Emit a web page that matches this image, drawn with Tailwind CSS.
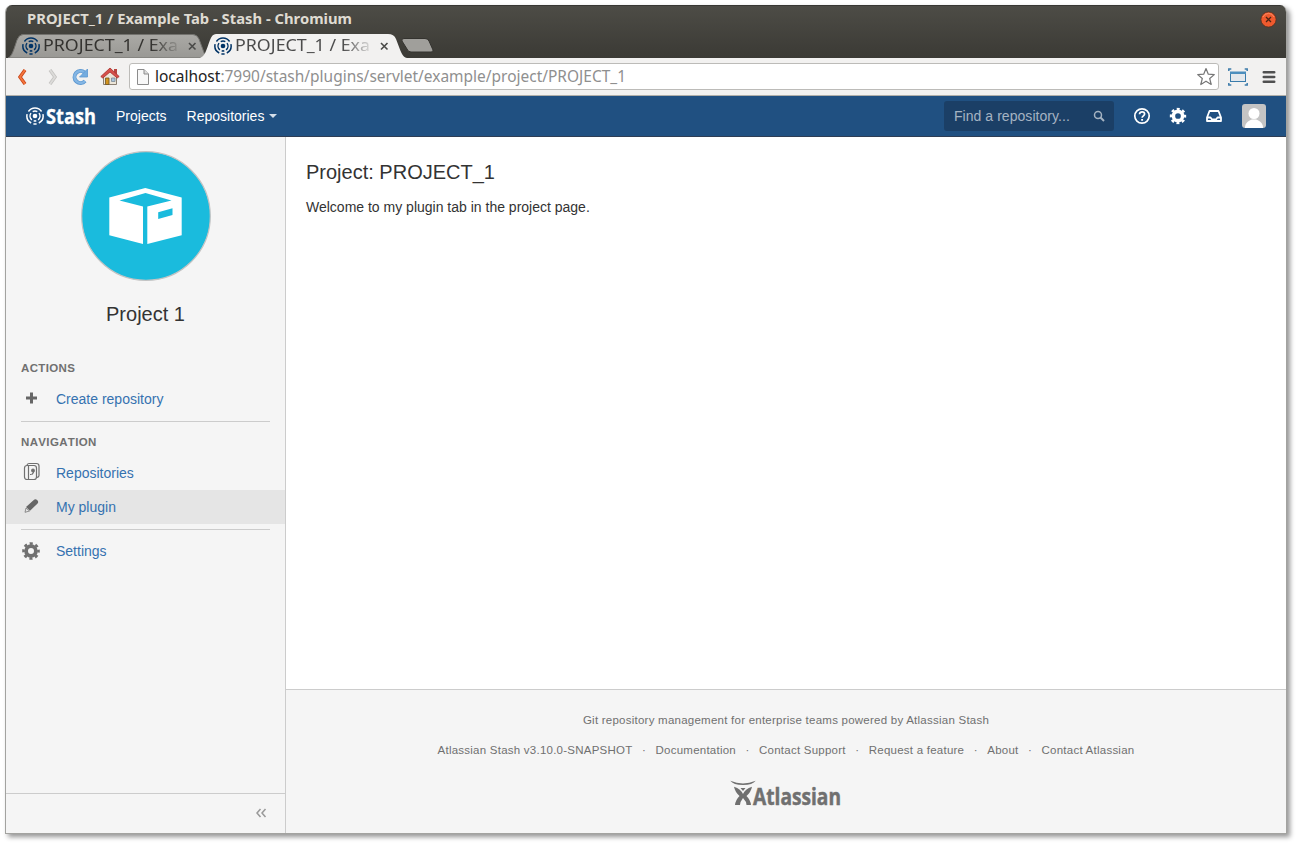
<!DOCTYPE html>
<html lang="en">
<head>
<meta charset="utf-8">
<title>PROJECT_1 / Example Tab - Stash</title>
<script src="https://cdn.jsdelivr.net/npm/@tailwindcss/browser@4"></script>
</head>
<body class="w-[1296px] h-[843px] overflow-hidden bg-white pl-[5px] pt-[5px] font-['Liberation_Sans',sans-serif] text-[14px] text-[#333]">
<svg width="0" height="0" class="absolute">
  <defs>
    <symbol id="target" viewBox="0 0 18 18">
      <g fill="none" stroke="currentColor" stroke-width="1.5">
        <path d="M2.400 4.500A8 8 0 0 1 15.600 4.500M1.100 7.200A8 8 0 0 0 5.200 16M16.900 7.200A8 8 0 0 1 12.800 16M7.400 16.900H10.600"/>
        <path d="M5.900 12.900A4.950 4.950 0 0 1 5 6.100M12.100 12.900A4.950 4.950 0 0 0 13 6.100M6.700 4.600A4.950 4.950 0 0 1 11.300 4.600M7.700 13.800A4.950 4.950 0 0 0 10.300 13.800"/>
      </g>
      <circle cx="9" cy="9" r="2.300" fill="currentColor"/>
    </symbol>
    <symbol id="gear" viewBox="0 0 18 18">
      <g fill="none" stroke="currentColor">
        <circle cx="9" cy="9" r="4.9" stroke-width="3.8"/>
        <circle cx="9" cy="9" r="7.5" stroke-width="2.6" stroke-dasharray="3.1 2.79" stroke-dashoffset="1.55"/>
      </g>
    </symbol>
    <linearGradient id="tabGray" x1="0" y1="0" x2="0" y2="1"><stop offset="0" stop-color="#aaa9a5"/><stop offset="1" stop-color="#999894"/></linearGradient>
  </defs>
</svg>
<div class="w-[1282px] h-[829px] rounded-t-[7px] border-l border-r border-b border-[#a3a3a0] shadow-[3px_3px_5px_rgba(0,0,0,0.42)] overflow-hidden flex flex-col">
  <div class="h-[53px] shrink-0 bg-linear-to-b from-[#4d4c46] to-[#3b3a35] border-t border-[#383733] flex flex-col">
    <div class="h-[28px] flex items-start justify-between pl-[21px] pr-[9px]">
      <svg width="330" height="26" class="block"><text x="0" y="18" textLength="325" lengthAdjust="spacingAndGlyphs" font-family="Noto Sans" font-weight="700" font-size="14" fill="#dfdbd2">PROJECT_1 / Example Tab - Stash - Chromium</text></svg>
      <svg width="17" height="17" viewBox="0 0 17 17" class="mt-[5px]"><circle cx="8.500" cy="8.500" r="7.600" fill="#ee5a2e" stroke="#59301f" stroke-width=".8"/><path d="M3 6a6 6 0 0 1 11 0" fill="none" stroke="#fb8a62" stroke-width="1"/><path d="m6 6 5 5m0-5-5 5" stroke="#4b2414" stroke-width="1.300"/></svg>
    </div>
    <div class="h-[24px] flex relative">
      <svg width="440" height="24" class="absolute left-0 top-0">
        <path d="M4 24C8 22 9 18 13 6Q15 .5 19 .5H189Q193 .5 195 5L202 24Z" transform="translate(-2 0)" fill="url(#tabGray)" stroke="#73726e"/>
        <path d="M194 24C199 22 200 17 204 6Q206 0 210 0H382Q388 0 390 5C395 18 396 23 401 24Z" fill="#f2f1f0"/>
        <path d="M398 4.500H419Q422 4.500 423 7L427 16Q427.500 18 425 18H405Q402 18 401 15L396 7Q395 4.500 398 4.500Z" fill="#a09f9b" stroke="#34332f" />
      </svg>
      <div class="relative w-[192px] flex items-center pl-[16px] text-[#003366]">
        <svg width="18" height="18"><use href="#target"/></svg>
        <svg width="142" height="24" class="ml-[3px] mask-r-from-76% mask-r-to-98%"><text x="0" y="17" textLength="135" lengthAdjust="spacingAndGlyphs" font-family="Noto Sans" font-size="16.500" fill="#33322f">PROJECT_1 / Exa</text></svg>
        <svg width="9" height="9" viewBox="0 0 9 9" class="ml-[3px]"><path d="m1 1 6.500 6.500m0-6.500L1 7.500" stroke="#4a4a48" stroke-width="1.600"/></svg>
      </div>
      <div class="relative w-[192px] flex items-center pl-[16px] text-[#003366]">
        <svg width="18" height="18"><use href="#target"/></svg>
        <svg width="142" height="24" class="ml-[3px] mask-r-from-76% mask-r-to-98%"><text x="0" y="17" textLength="135" lengthAdjust="spacingAndGlyphs" font-family="Noto Sans" font-size="16.500" fill="#4c4c4c">PROJECT_1 / Exa</text></svg>
        <svg width="9" height="9" viewBox="0 0 9 9" class="ml-[3px]"><path d="m1 1 6.500 6.500m0-6.500L1 7.500" stroke="#4a4a48" stroke-width="1.600"/></svg>
      </div>
    </div>
  </div>
  <div class="h-[38px] shrink-0 bg-[#f2f1f0] border-b border-[#b0afaa] flex items-center">
    <svg width="10" height="16" viewBox="0 0 10 16" class="ml-[11px]"><path d="M8 1 3 8l5 7" fill="none" stroke="#c9451a" stroke-width="3.400"/><path d="M8 1 3 8l5 7" fill="none" stroke="#f4763c" stroke-width="1.800"/></svg>
    <svg width="10" height="16" viewBox="0 0 10 16" class="ml-[21px]"><path d="m2 1 5 7-5 7" fill="none" stroke="#c4c3c1" stroke-width="3.400"/><path d="m2 1 5 7-5 7" fill="none" stroke="#dcdbd9" stroke-width="1.800"/></svg>
    <svg width="18" height="18" viewBox="0 0 18 18" class="ml-[13px]"><path d="M13.500 4.500A6 6 0 1 0 14 13" fill="none" stroke="#5c97d0" stroke-width="4"/><path d="M13.500 4.500A6 6 0 1 0 14 13" fill="none" stroke="#84b6e4" stroke-width="2.400"/><path d="M16.500 1v8H8.500Z" fill="#74acdf" stroke="#5c97d0" stroke-width=".8"/></svg>
    <svg width="20" height="20" viewBox="0 0 20 20" class="ml-[11px] mb-[2px]"><path d="M3.500 9v9.500h13V9L10 3Z" fill="#ece5d8" stroke="#8a7f72"/><path d="M14 3h3v6l-3-3Z" fill="#b8473f"/><path d="M.8 10.500 10 2l9.200 8.500-2 1.500L10 6l-7.200 6Z" fill="#d6504b" stroke="#a8322c" stroke-width=".8"/><path d="M5.500 12h3.500v6.500H5.500Z" fill="#d3941f" stroke="#6e5524" stroke-width=".8"/><path d="M11.500 12h3.500v3.500h-3.500Z" fill="#a9c4dc" stroke="#7b8a96" stroke-width=".8"/></svg>
    <div class="ml-[9px] w-[1090px] h-[27px] rounded-[3px] border border-[#bcbbb8] bg-white flex items-center">
      <svg width="12" height="16" viewBox="0 0 12 16" class="ml-[7px]"><path d="M.5.500h6.500l4.500 4.500v10.500H.5Z" fill="#f8f8f8" stroke="#8c8c8c"/><path d="M7 .5V5h4.500" fill="#ddd" stroke="#8c8c8c"/></svg>
      <svg width="480" height="24" class="ml-[6px]"><text x="0" y="17" textLength="471" lengthAdjust="spacingAndGlyphs" font-family="Noto Sans" font-size="15.500" fill="#8f8f8f"><tspan fill="#222">localhost</tspan>:7990/stash/plugins/servlet/example/project/PROJECT_1</text></svg>
      <svg width="20" height="19" viewBox="0 0 20 19" class="ml-auto mr-[2px]"><path d="m10 1.500 2.300 5.700 6 .4-4.600 3.900 1.500 6L10 14.200l-5.200 3.300 1.500-6L1.700 7.600l6-.4Z" fill="#fff" stroke="#777" stroke-width="1.200" stroke-linejoin="round"/></svg>
    </div>
    <svg width="20" height="18" viewBox="0 0 20 18" class="ml-[9px]"><path d="M.8 3V1h2.500M16.700 1h2.500v2M.8 15v2h2.500M16.700 17h2.500v-2" fill="none" stroke="#3e7cab" stroke-width="1.500"/><rect x="2.500" y="4.500" width="15" height="9" fill="#e4e8ec" stroke="#3a7cab"/><path d="M2 3.500h16V6H2Z" fill="#4c8ebd"/></svg>
    <svg width="14" height="14" viewBox="0 0 14 14" class="ml-[14px]"><path d="M1.800 2.300h10.400M1.800 7h10.400M1.800 11.700h10.400" stroke="#505050" stroke-width="2.600" stroke-linecap="round"/></svg>
  </div>
  <header class="h-[41px] shrink-0 bg-[#205081] border-b border-[#2e3d54] flex items-center text-white">
    <svg width="18" height="18" class="ml-[20px]"><use href="#target"/></svg>
    <svg width="54" height="38" class="ml-[2px]"><text x="0" y="27" textLength="50" lengthAdjust="spacingAndGlyphs" font-family="Open Sans" font-weight="700" font-size="20.500" fill="#fff" stroke="#fff" stroke-width=".3">Stash</text></svg>
    <span class="ml-[16px]">Projects</span>
    <span class="ml-[20px]">Repositories</span>
    <svg width="8" height="4" class="ml-[5px]"><path d="M0 0h8L4 4Z" fill="#d5dfea"/></svg>
    <div class="ml-auto w-[170px] h-[30px] rounded-[3px] bg-[#1b3f66] flex items-center justify-between pl-[10px] pr-[9px] text-[#a5b3c2]">
      <span class="tracking-[0.05px]">Find a repository...</span>
      <svg width="12" height="12" viewBox="0 0 12 12" fill="none" stroke="#a5b3c2"><circle cx="5" cy="5" r="3.500" stroke-width="1.500"/><path d="m7.500 7.500 3.500 3.500" stroke-width="2"/></svg>
    </div>
    <svg width="18" height="18" viewBox="0 0 18 18" class="ml-[19px]" fill="none" stroke="#fff"><circle cx="9" cy="9" r="7.200" stroke-width="1.700"/><path d="M6.500 7.200C6.500 4 11.600 4.200 11.600 7c0 1.800-2.500 1.900-2.500 3.800" stroke-width="1.700"/><path d="M9.100 12v1.800" stroke-width="1.900"/></svg>
    <svg width="18" height="18" class="ml-[18px]" viewBox="0 0 19 19"><use href="#gear" x=".5" y=".5" width="18" height="18"/></svg>
    <svg width="18" height="14" viewBox="0 0 18 14" class="ml-[18px]"><path d="M4.500 2h9L16 8.500V12H2V8.500ZM2 8.500h3.500L7 10.500h4l1.500-2H16" fill="none" stroke="#fff" stroke-width="1.800" stroke-linejoin="round"/></svg>
    <svg width="24" height="24" viewBox="0 0 24 24" class="ml-[19px] mr-[20px] rounded-[3px] bg-[#c4c4c4]"><circle cx="12" cy="9.500" r="5.500" fill="#fff"/><path d="M3 24c0-5 3-7 7-8.500h4c4 1.500 7 3.500 7 8.500Z" fill="#fff"/></svg>
  </header>
  <div class="flex flex-1 min-h-0">
    <aside class="w-[280px] shrink-0 bg-[#f5f5f5] border-r border-[#ccc] flex flex-col">
      <svg width="130" height="130" viewBox="0 0 130 130" class="ml-[75px] mt-[14px]">
        <circle cx="65" cy="65" r="64.300" fill="#1abbdd" stroke="#c3c3c3" stroke-width="1.200"/>
        <path d="M28.300 46.500 64.300 37l36.400 9.500v37.800L66.300 93V55.500L90.500 49.600 64.500 42l-26 7.600 23.500 5.900V93l-33.700-8.700Z" fill="#fff"/>
        <path d="m77.200 61.200 14.300-4v6.800l-14.300 4Z" fill="#1abbdd"/>
      </svg>
      <h2 class="mt-[21px] text-[20px] leading-[24px] text-center">Project 1</h2>
      <h3 class="ml-[15px] mt-[36px] h-[13px] text-[11.500px] leading-[13px] font-bold text-[#707070] [font-kerning:none] tracking-[0.35px]">ACTIONS</h3>
      <div class="mt-[7px] h-[34px] flex items-center pl-[15px] text-[#3572b0]">
        <svg width="20" height="20" viewBox="0 0 20 20" class="mr-[15px] mb-[2px]"><path d="M10.500 4.500v11M5 10h11" stroke="#666" stroke-width="3"/></svg>Create repository</div>
      <hr class="mx-[15px] mt-[5px] border-[#ccc]">
      <h3 class="ml-[15px] mt-[14px] h-[13px] text-[11.500px] leading-[13px] font-bold text-[#707070] [font-kerning:none] tracking-[0.35px]">NAVIGATION</h3>
      <div class="mt-[7px] h-[34px] flex items-center pl-[15px] text-[#3572b0]">
        <svg width="20" height="20" viewBox="0 0 20 20" class="mr-[15px] mb-[2px]" fill="none" stroke="#707070" stroke-width="1.200"><rect x="3.500" y="3.500" width="12" height="14" rx="2.500"/><path d="M6 3c.5-1.200 1-1.500 2-1.500h7.500q2.500 0 2.500 2.500v9.500q0 1.500-2 2M7.500 3.500v14"/><circle cx="12" cy="8.500" r="1.300" fill="#707070"/><path d="M12.800 9c0 1.500-.3 2-2 3.500M9 12.500h1.500"/></svg>Repositories</div>
      <div class="h-[34px] flex items-center pl-[15px] text-[#3572b0] bg-[#e5e5e5]">
        <svg width="20" height="20" viewBox="0 0 20 20" class="mr-[15px] mb-[2px]" fill="#666"><path d="m5 11 7.500-6.800q2-1.700 3.800 0t0 3.600L9 14.800Z"/><path d="M5 12 8.500 15 4 16.300Z" fill="none" stroke="#777" stroke-width=".8"/></svg>My plugin</div>
      <hr class="mx-[15px] mt-[5px] border-[#ccc]">
      <div class="mt-[4px] h-[34px] flex items-center pl-[16px] text-[#3572b0]">
        <svg width="18" height="18" class="mr-[16px] text-[#707070]"><use href="#gear"/></svg>Settings</div>
      <div class="mt-auto h-[40px] border-t border-[#ccc] flex items-center justify-end pr-[18px] pb-[2px]">
        <svg width="12" height="10" viewBox="0 0 12 10" fill="none" stroke="#999" stroke-width="1.500"><path d="M5.500 1 2 5l3.500 4M10.500 1 7 5l3.500 4"/></svg>
      </div>
    </aside>
    <main class="flex-1 flex flex-col bg-white">
      <h1 class="ml-[20px] mt-[23px] text-[20px] leading-[24px]">Project: PROJECT_1</h1>
      <p class="ml-[20px] mt-[13px] leading-[20px]">Welcome to my plugin tab in the project page.</p>
      <footer class="mt-auto h-[144px] bg-[#f5f5f5] border-t border-[#ccc] text-[11.500px] tracking-[0.24px] leading-[20px] text-[#707070] flex flex-col items-center">
        <div class="mt-[20px]">Git repository management for enterprise teams powered by Atlassian Stash</div>
        <div class="mt-[10px] flex whitespace-nowrap"><span>Atlassian Stash v3.10.0-SNAPSHOT</span><span class="w-[23px] text-center">·</span><span>Documentation</span><span class="w-[23px] text-center">·</span><span>Contact Support</span><span class="w-[23px] text-center">·</span><span>Request a feature</span><span class="w-[23px] text-center">·</span><span>About</span><span class="w-[23px] text-center">·</span><span>Contact Atlassian</span></div>
        <svg width="114" height="36" viewBox="0 0 114 36" class="mt-[20px] ml-[2px] tracking-normal" fill="#707070">
          <path d="M.3 .8Q13 6 25.700 .8q-3 4.200-12.700 4.200T.3 .8Z"/>
          <path d="M4 6.800Q11 9 13 14q2-5 9-7.200-1 5.300-5.500 9.300 4 4 4.500 9h-4.500q0-3.500-3.500-7Q10 22 10 25H5q.5-5 4.500-9-4.500-4-5.500-9.200Z"/>
          <path d="M10.500 8h5L13 11Z"/>
          <text x="23" y="24.500" textLength="88" lengthAdjust="spacingAndGlyphs" font-family="Open Sans" font-weight="700" font-size="23" stroke="#707070" stroke-width=".5">Atlassian</text>
        </svg>
      </footer>
    </main>
  </div>
</div>
</body>
</html>
